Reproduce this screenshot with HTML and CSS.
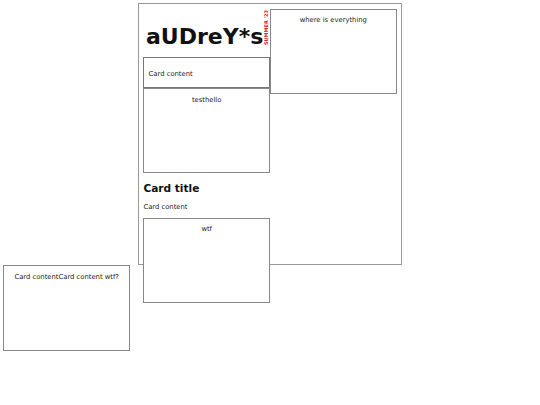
FILE: index.html
```html
<!DOCTYPE html>
<html>
<head>
<meta charset="utf-8">
<title>aUDreY*s</title>
<link rel="stylesheet" href="styles.css">
</head>
<body>
<div class="board">
  <div class="col">
    <header class="brand">
      <h1 class="logo">aUDreY*s</h1>
      <span class="season">SUMMER '23</span>
    </header>
    <div class="note">Card content</div>
    <div class="card">testhello</div>
    <h2 class="title">Card title</h2>
    <p class="text">Card content</p>
    <div class="card">wtf</div>
  </div>
  <div class="card">where is everything</div>
</div>
<div class="card">Card contentCard content wtf?</div>
</body>
</html>
```

FILE: styles.css
```css
html {
  background: #fff;
}

body {
  margin: 3.4px;
  font-family: "DejaVu Sans", Verdana, sans-serif;
  font-size: 6.8px;
  color: #222;
}

.board {
  box-sizing: border-box;
  width: 263.6px;
  height: 262px;
  margin: 0 auto;
  padding: 4.2px;
  border: 1px solid #999;
  display: flex;
  align-items: flex-start;
}

.col {
  flex: none;
  width: 126.6px;
}

.brand {
  display: flex;
  align-items: flex-end;
  height: 48.7px;
  padding-left: 2.6px;
}

.logo {
  margin: 0 0 7.8px;
  font-size: 22px;
  font-weight: bold;
  line-height: normal;
  color: #111;
}

.season {
  writing-mode: vertical-rl;
  transform: rotate(180deg);
  margin: 0 0 12px 0.4px;
  font-size: 5px;
  font-weight: bold;
  line-height: 1;
  color: #e02424;
}

.note {
  box-sizing: border-box;
  height: 31px;
  padding: 11.4px 4.2px 9.5px;
  border: 1px solid #777;
  line-height: normal;
}

.card {
  box-sizing: border-box;
  flex: none;
  width: 126.6px;
  height: 85.2px;
  padding: 6.5px 4.2px;
  border: 1px solid #888;
  background: #fff;
  text-align: center;
}

.title {
  margin: 0.83em 0;
  font-size: 10.6px;
  font-weight: bold;
  color: #111;
}

.text {
  margin: 1em 0;
}
```
